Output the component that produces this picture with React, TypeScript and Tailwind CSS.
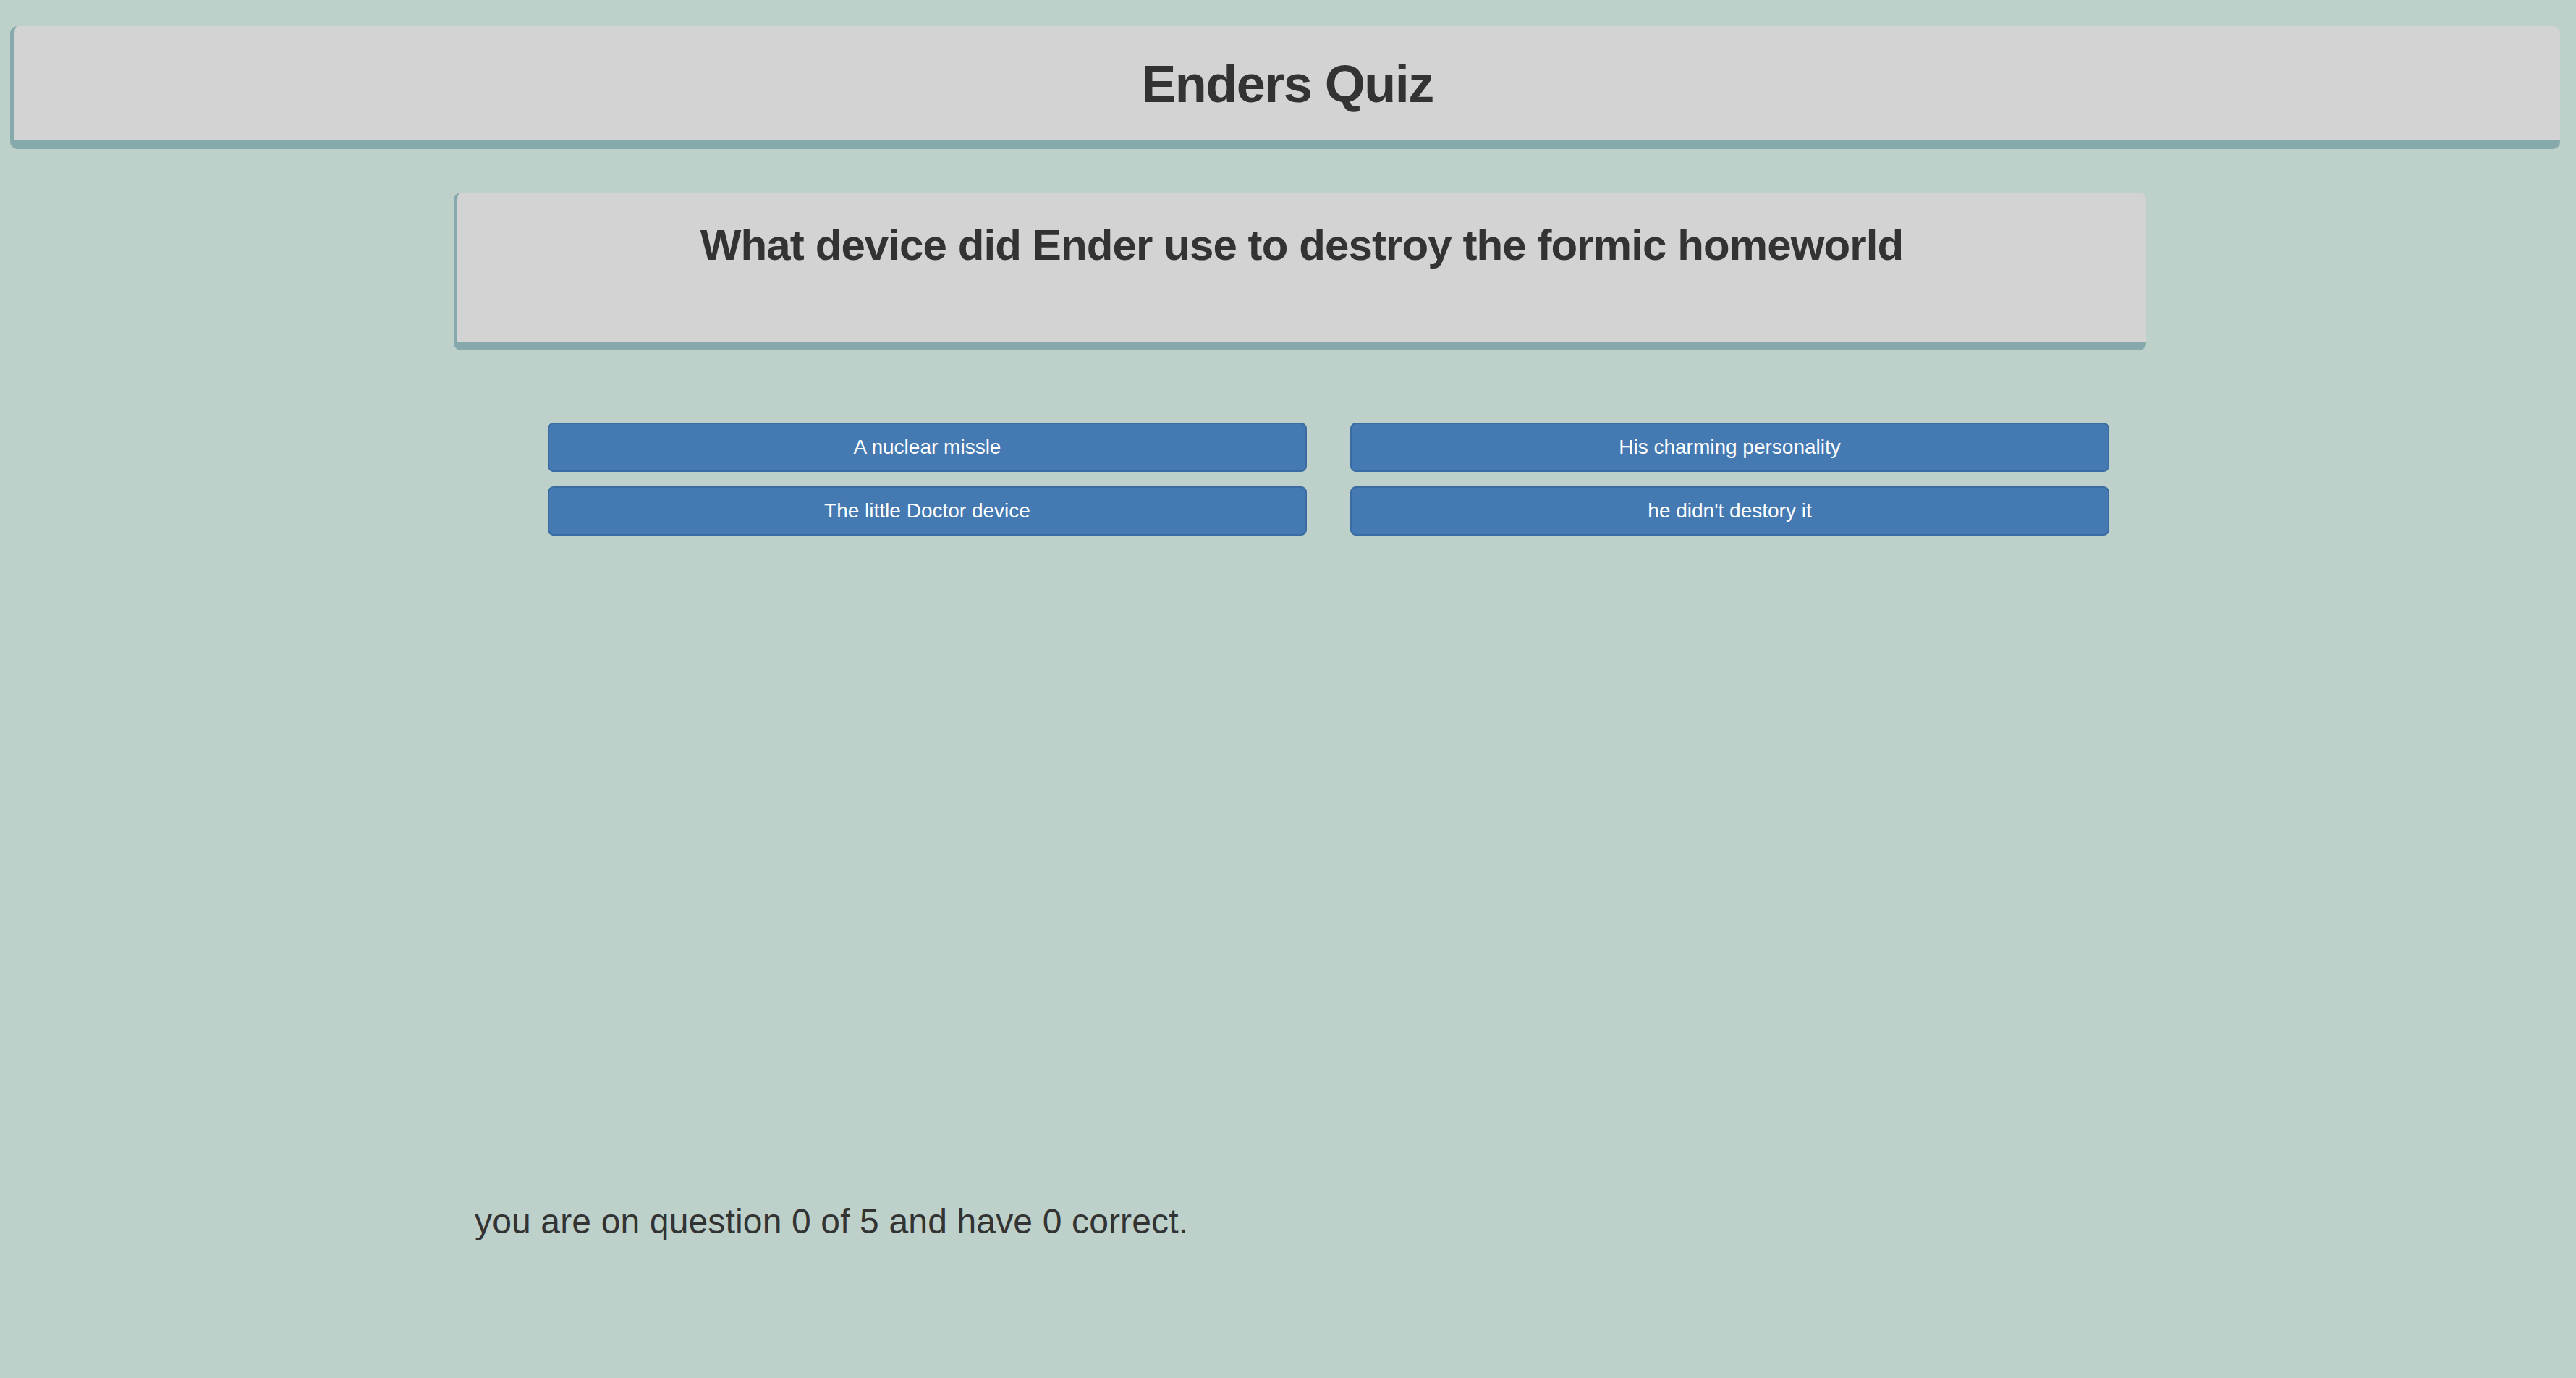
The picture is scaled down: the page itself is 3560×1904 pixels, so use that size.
import React from 'react';

const answers = ['A nuclear missle', 'His charming personality', 'The little Doctor device', "he didn't destory it"];

export default function App() {
    return (
        <div className="min-h-screen w-full bg-[#bdd0ca] pt-[36px] pb-[40px] text-[#333333]" style={{ fontFamily: '"Liberation Sans", Arial, Helvetica, sans-serif' }}>
            <div className="ml-[14px] mr-[22px] h-[170px] rounded-[10px] border-b-[12px] border-l-[6px] border-[#86a9ac] bg-[#d3d3d3] pt-[41px]">
                <h1 className="text-center text-[72px] font-bold leading-[1.1] tracking-[-1.5px]">Enders Quiz</h1>
            </div>

            <div className="mt-[60px] ml-[627px] h-[218px] w-[2339px] rounded-[10px] border-b-[12px] border-l-[5px] border-[#86a9ac] bg-[#d3d3d3] pt-[40px]">
                <h2 className="text-center text-[60px] font-bold leading-[1.1] tracking-[-0.9px]">What device did Ender use to destroy the formic homeworld</h2>
            </div>

            <div className="mt-[100px] ml-[757px] grid w-[2158px] grid-cols-2 gap-x-[60px] gap-y-[20px]">
                {answers.map((a) => (
                    <button key={a} type="button" className="h-[68px] rounded-[8px] border-2 border-[#3a6ca3] bg-[#4479b2] text-center text-[28px] leading-[40px] text-white">
                        {a}
                    </button>
                ))}
            </div>

            <h3 className="mt-[922px] ml-[656px] text-[48px] font-medium leading-[1.1] tracking-[0.15px]">you are on question 0 of 5 and have 0 correct.</h3>
        </div>
    );
}
